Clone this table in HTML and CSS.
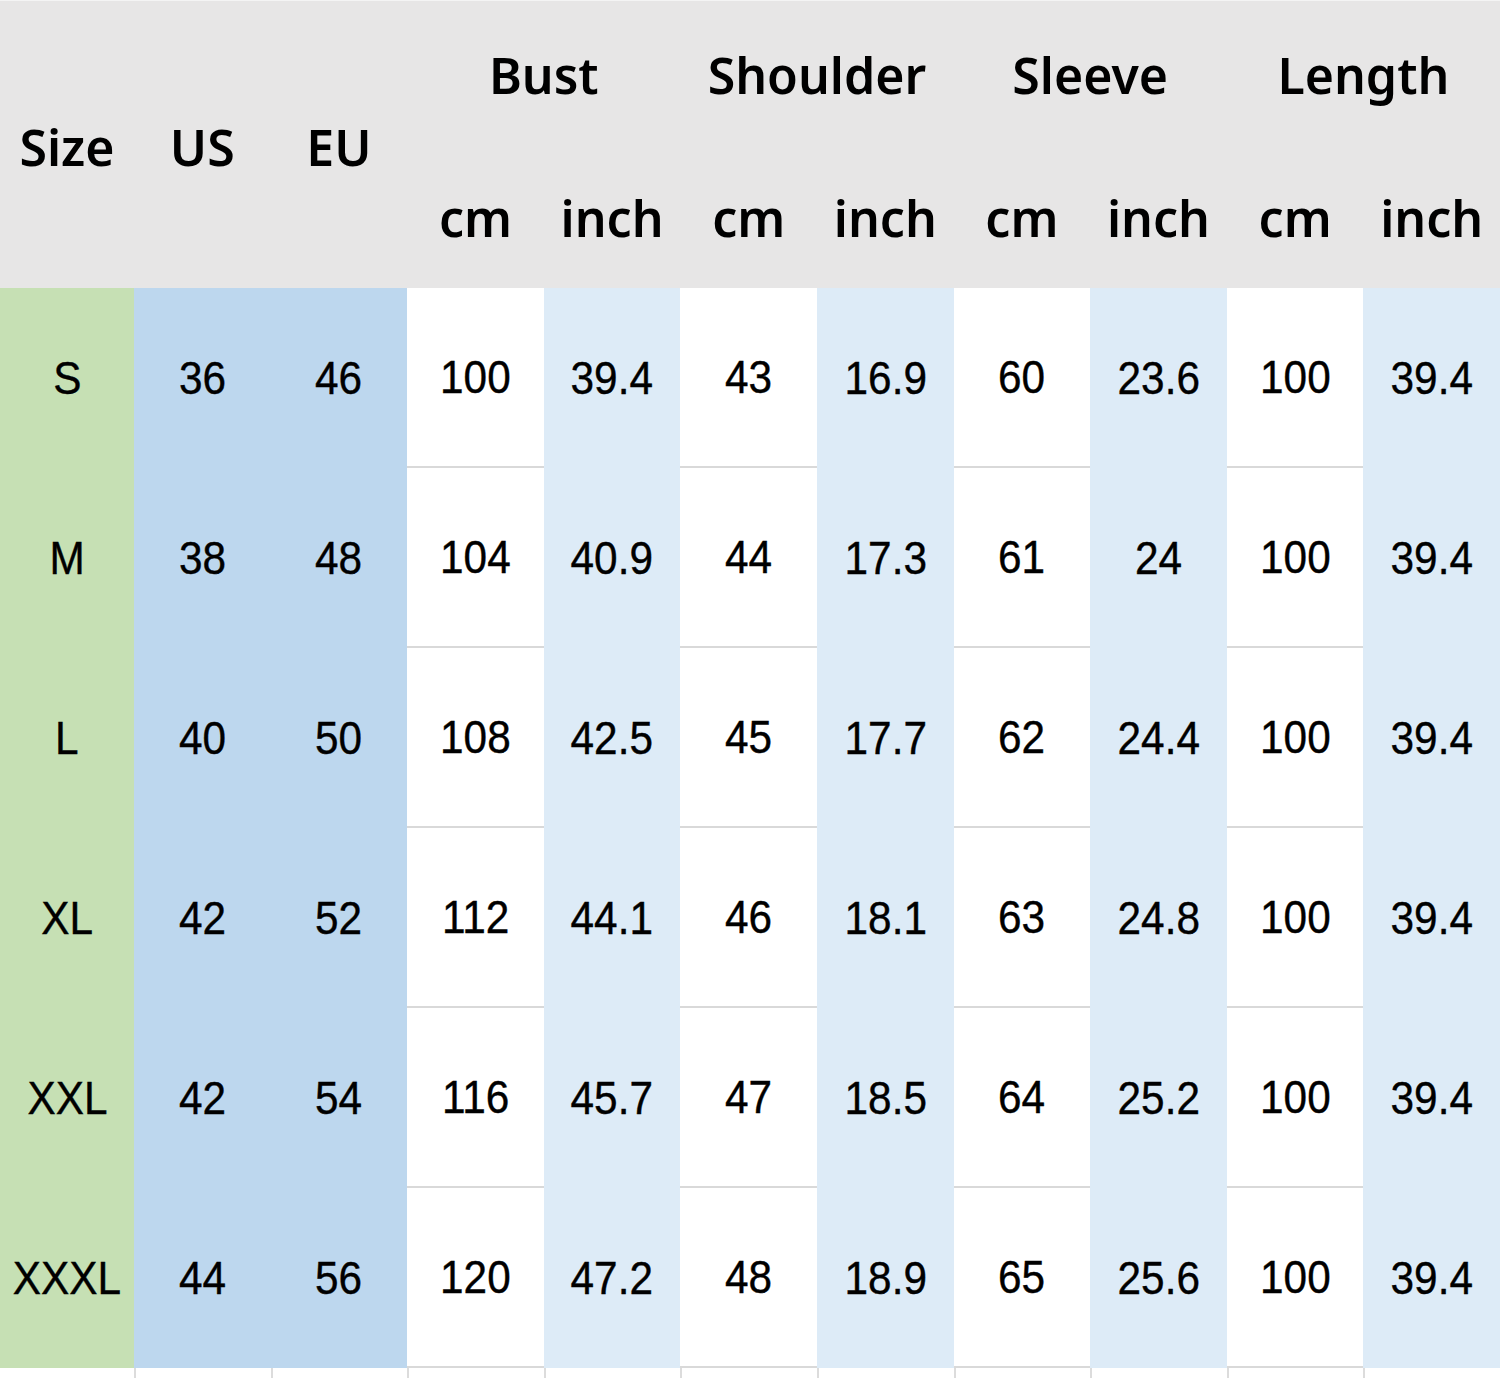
FILE: index.html
```html
<!DOCTYPE html>
<html>
<head>
<meta charset="utf-8">
<link rel="stylesheet" href="styles.css">
</head>
<body>
<div class="sheet">
  <div class="head">
    <div class="hcell span-rows">Size</div>
    <div class="hcell span-rows">US</div>
    <div class="hcell span-rows">EU</div>
    <div class="hcell group">Bust</div>
    <div class="hcell group">Shoulder</div>
    <div class="hcell group">Sleeve</div>
    <div class="hcell group">Length</div>
    <div class="hcell unit">cm</div>
    <div class="hcell unit">inch</div>
    <div class="hcell unit">cm</div>
    <div class="hcell unit">inch</div>
    <div class="hcell unit">cm</div>
    <div class="hcell unit">inch</div>
    <div class="hcell unit">cm</div>
    <div class="hcell unit">inch</div>
  </div>
  <div class="body" id="body"></div>
  <div class="tail">
    <div class="tcell"></div><div class="tcell"></div><div class="tcell"></div><div class="tcell"></div>
    <div class="tcell"></div><div class="tcell"></div><div class="tcell"></div><div class="tcell"></div>
    <div class="tcell"></div><div class="tcell"></div><div class="tcell"></div>
  </div>
</div>
<script src="app.js"></script>
</body>
</html>
```

FILE: app.js
```js
var rows = [
  ["S","36","46","100","39.4","43","16.9","60","23.6","100","39.4"],
  ["M","38","48","104","40.9","44","17.3","61","24","100","39.4"],
  ["L","40","50","108","42.5","45","17.7","62","24.4","100","39.4"],
  ["XL","42","52","112","44.1","46","18.1","63","24.8","100","39.4"],
  ["XXL","42","54","116","45.7","47","18.5","64","25.2","100","39.4"],
  ["XXXL","44","56","120","47.2","48","18.9","65","25.6","100","39.4"]
];
var kinds = ["size","us","eu","cm","in","cm","in","cm","in","cm","in"];
var body = document.getElementById("body");
rows.forEach(function (r) {
  r.forEach(function (v, i) {
    var c = document.createElement("div");
    c.className = "cell " + kinds[i];
    var s = document.createElement("span");
    s.className = "num";
    s.textContent = v;
    c.appendChild(s);
    body.appendChild(c);
  });
});
```

FILE: styles.css
```css
html, body {
  margin: 0;
  padding: 0;
  background: #ffffff;
}
.sheet {
  width: 1500px;
}
.head {
  display: grid;
  grid-template-columns: 134px repeat(10, 1fr);
  grid-template-rows: 148px 140px;
  background: #e7e6e6;
  border-top: 1px solid #f4f4f4;
  box-sizing: border-box;
  height: 288px;
  font-family: "Noto Sans", "Open Sans", sans-serif;
  font-weight: 600;
  font-size: 50px;
  color: #000;
}
.hcell {
  display: flex;
  align-items: center;
  justify-content: center;
  line-height: 1;
}
.span-rows {
  grid-row: 1 / span 2;
  padding-top: 4px;
}
.group {
  grid-column: span 2;
  padding-bottom: 0;
}
.unit {
  padding-bottom: 2px;
}
.body {
  display: grid;
  grid-template-columns: 134px repeat(10, 1fr);
  grid-auto-rows: 180px;
  font-family: "Liberation Sans", Arial, sans-serif;
  font-size: 46px;
  color: #000;
}
.cell {
  display: flex;
  align-items: center;
  justify-content: center;
  box-sizing: border-box;
}
.num {
  display: inline-block;
  transform: scaleX(0.92);
  line-height: 1;
  -webkit-text-stroke: 0.4px #000;
}
.size { background: #c6e0b4; }
.us, .eu { background: #bdd7ee; }
.in { background: #ddebf7; }
.cm {
  background: #ffffff;
  border-bottom: 2px solid #d9d9d9;
}
.tail {
  display: grid;
  grid-template-columns: 134px repeat(10, 1fr);
  height: 10px;
}
.tcell {
  border-left: 2px solid #dcdcdc;
}
.tcell:first-child {
  border-left: none;
}
```
